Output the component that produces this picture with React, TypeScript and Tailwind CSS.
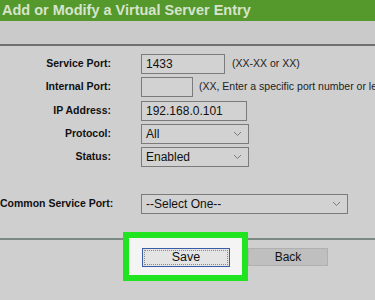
const Chevron = () => (
  <svg width="9" height="6" viewBox="0 0 9 6" className="shrink-0">
    <path d="M1 1 L4.5 4.5 L8 1" fill="none" stroke="#7a7a7a" strokeWidth="1" />
  </svg>
);

const Field = ({ children, className }: { children?: React.ReactNode; className: string }) => (
  <div
    className={`flex items-center h-[20px] border border-[#7b7b7b] bg-[#d2d2d2] px-[4px] text-[12px] text-[#111] ${className}`}
  >
    {children}
  </div>
);

const Select = ({ value, className }: { value: string; className: string }) => (
  <Field className={`justify-between pr-[6px] ${className}`}>
    <span>{value}</span>
    <Chevron />
  </Field>
);

const Row = ({ label, children }: { label: string; children: React.ReactNode }) => (
  <div className="flex items-center h-[20px]">
    <div className="w-[111px] shrink-0 text-right font-bold text-[10.5px] text-[#111] whitespace-nowrap">{label}</div>
    <div className="ml-[30px] flex items-center whitespace-nowrap">{children}</div>
  </div>
);

export default function App() {
  return (
    <div className="w-[375px] h-[300px] overflow-hidden bg-[#cfcfcf] font-['Liberation_Sans',Arial,sans-serif]">
      <div className="h-[21px] bg-[#55982c] flex items-center pl-[2px]">
        <span className="font-bold text-[14.5px] text-[#d6e4cc] whitespace-nowrap">Add or Modify a Virtual Server Entry</span>
      </div>
      <div className="h-[23px] bg-[#cacaca]" />
      <div className="h-[2px] bg-[#6f6f6f]" />
      <div className="flex flex-col gap-[3.25px] pt-[8px]">
        <Row label="Service Port:">
          <Field className="w-[84px]">1433</Field>
          <span className="ml-[7px] text-[10.5px] text-[#222]">(XX-XX or XX)</span>
        </Row>
        <Row label="Internal Port:">
          <Field className="w-[52px]" />
          <span className="ml-[6px] text-[10.5px] text-[#222]">(XX, Enter a specific port number or le</span>
        </Row>
        <Row label="IP Address:">
          <Field className="w-[106px]">192.168.0.101</Field>
        </Row>
        <Row label="Protocol:">
          <Select value="All" className="w-[108px]" />
        </Row>
        <Row label="Status:">
          <Select value="Enabled" className="w-[108px]" />
        </Row>
      </div>
      <div className="mt-[27px]">
        <Row label="Common Service Port:">
          <Select value="--Select One--" className="w-[207px]" />
        </Row>
      </div>
      <div className="mt-[24px] h-[1.5px] bg-[#7c8883]" />
      <div className="flex items-start pl-[123px] -mt-[8px]">
        <div className="relative z-10 border-[6px] border-[#1fe41f] bg-[#f4f4f4] pl-[13px] pr-[12px] pt-[10px] pb-[8px]">
          <div className="w-[88px] h-[19px] border border-[#3a5ca6] bg-[#e4e4e4] p-[1px]">
            <div className="h-full border border-dotted border-[#8a8a8a] flex items-center justify-center text-[12.5px] text-[#111]">
              Save
            </div>
          </div>
        </div>
        <div className="mt-[16px] w-[80px] h-[18px] bg-[#bfbfbf] border border-[#b0b0b0] flex items-center justify-center text-[12px] text-[#111]">
          Back
        </div>
      </div>
    </div>
  );
}
